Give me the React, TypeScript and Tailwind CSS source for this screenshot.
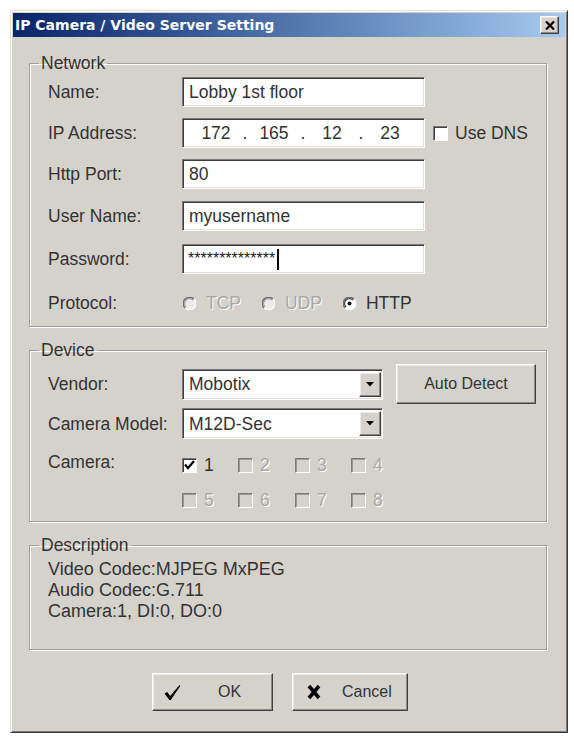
import React from 'react';

const sunken =
  'bg-white border border-t-[#7a7a7a] border-l-[#7a7a7a] border-b-white border-r-white shadow-[inset_1px_1px_0_#3c3c3c,inset_-1px_-1px_0_#e2dfda]';
const raised =
  'bg-[#d5d2cc] border border-t-white border-l-white border-b-[#404040] border-r-[#404040] shadow-[inset_-1px_-1px_0_#8a8a8a,inset_1px_1px_0_#ebe9e5]';
const disabledText = 'text-[#a9a7a3] [text-shadow:1px_1px_0_#ffffff]';

const Label: React.FC<{ children: React.ReactNode }> = ({ children }) => (
  <div className="w-[134px] shrink-0">{children}</div>
);

const TextBox: React.FC<{ children?: React.ReactNode; className?: string }> = ({ children, className }) => (
  <div className={`${sunken} w-[243px] h-[30px] flex items-center ${className ?? ''}`}>{children}</div>
);

const Radio: React.FC<{ checked?: boolean; disabled?: boolean; label: string }> = ({ checked, disabled, label }) => (
  <div className="flex items-center gap-[10px]">
    <svg width="13" height="13" viewBox="0 0 13 13">
      <circle cx="6.5" cy="6.5" r="6" fill={disabled ? '#ecebe8' : '#ffffff'} />
      <path d="M11 2.2 A6 6 0 0 0 2 11" fill="none" stroke="#6e6e6e" strokeWidth="1.5" />
      <path d="M10 3 A4.6 4.6 0 0 0 3 10" fill="none" stroke={disabled ? '#a09e9a' : '#404040'} strokeWidth="1.2" />
      <path d="M2.2 11 A6 6 0 0 0 11 2" fill="none" stroke="#ffffff" strokeWidth="1.2" />
      {checked && <circle cx="6.5" cy="6.5" r="2" fill="#111" />}
    </svg>
    <span className={disabled ? disabledText : ''}>{label}</span>
  </div>
);

const Check: React.FC<{ checked?: boolean; disabled?: boolean; label: string }> = ({ checked, disabled, label }) => (
  <div className="flex items-center gap-[7px]">
    <div
      className={`w-[15px] h-[15px] border border-t-[#7a7a7a] border-l-[#7a7a7a] border-b-white border-r-white flex items-center justify-center ${
        disabled ? 'bg-[#d5d2cc] shadow-[inset_1px_1px_0_#9a9894]' : 'bg-white shadow-[inset_1px_1px_0_#3c3c3c]'
      }`}
    >
      {checked && (
        <svg width="11" height="10" viewBox="0 0 11 10">
          <path d="M1 4.5 L4 8 L10 1" fill="none" stroke="#000" strokeWidth="2.2" />
        </svg>
      )}
    </div>
    <span className={disabled ? disabledText : ''}>{label}</span>
  </div>
);

const Select: React.FC<{ value: string }> = ({ value }) => (
  <div className={`${sunken} w-[201px] h-[31px] flex items-center shrink-0`}>
    <span className="flex-1 pl-[6px]">{value}</span>
    <div className={`${raised} w-[22px] h-[25px] mr-[1px] flex items-center justify-center`}>
      <svg width="8" height="5" viewBox="0 0 8 5">
        <path d="M0 0 H8 L4 4.5 Z" fill="#000" />
      </svg>
    </div>
  </div>
);

const Group: React.FC<{ title: string; className?: string; children: React.ReactNode }> = ({ title, className, children }) => (
  <fieldset className={`min-w-0 border border-[#a09e9a] shadow-[inset_1px_1px_0_#fff,1px_1px_0_#fff] ${className ?? ''}`}>
    <legend className="ml-[9px] px-[2px] leading-[20px]">{title}</legend>
    {children}
  </fieldset>
);

export default function App() {
  return (
    <div className="min-h-[740px] bg-white pt-[10px] pl-[10px] font-['Liberation_Sans',Arial,sans-serif] text-[17.5px] leading-[20px] text-[#333]">
      <div className="w-[558px] h-[723px] bg-[#d5d2cc] border border-t-[#e4e1dc] border-l-[#e4e1dc] border-b-[#3a3a3a] border-r-[#3a3a3a] shadow-[inset_1px_1px_0_#fff,inset_-1px_-1px_0_#7a7a7a] p-[2px] flex flex-col">
        <div className="h-[24px] bg-gradient-to-r from-[#0a246a] to-[#a6caf0] flex items-center justify-between pl-[2px] pr-[6px]">
          <span className="font-['DejaVu_Sans',Verdana,sans-serif] font-bold text-[14px] text-white">
            IP Camera / Video Server Setting
          </span>
          <div className={`${raised} w-[19px] h-[18px] flex items-center justify-center`}>
            <svg width="10" height="9" viewBox="0 0 10 9">
              <path d="M1 0.5 L9 8.5 M9 0.5 L1 8.5" stroke="#000" strokeWidth="2.2" />
            </svg>
          </div>
        </div>

        <div className="pl-[16px] pr-[18px] pt-[16px] flex flex-col">
          <Group title="Network">
            <div className="px-[18px] pt-[4px] pb-[8px] flex flex-col">
              <div className="flex items-center">
                <Label>Name:</Label>
                <TextBox className="pl-[6px]">Lobby 1st floor</TextBox>
              </div>
              <div className="flex items-center mt-[11px]">
                <Label>IP Address:</Label>
                <TextBox className="pl-[9px]">
                  <span className="w-[48px] text-center">172</span>
                  <span className="w-[10px] text-center">.</span>
                  <span className="w-[48px] text-center">165</span>
                  <span className="w-[10px] text-center">.</span>
                  <span className="w-[48px] text-center">12</span>
                  <span className="w-[10px] text-center">.</span>
                  <span className="w-[48px] text-center">23</span>
                </TextBox>
                <div className="ml-[8px]">
                  <Check label="Use DNS" />
                </div>
              </div>
              <div className="flex items-center mt-[11px]">
                <Label>Http Port:</Label>
                <TextBox className="pl-[6px]">80</TextBox>
              </div>
              <div className="flex items-center mt-[12px]">
                <Label>User Name:</Label>
                <TextBox className="pl-[6px]">myusername</TextBox>
              </div>
              <div className="flex items-center mt-[13px]">
                <Label>Password:</Label>
                <TextBox className="pl-[5px]">
                  <span className="text-[16px] self-start mt-[4px] text-[#222]">**************</span>
                  <span className="w-[2px] h-[21px] bg-black ml-[2px]" />
                </TextBox>
              </div>
              <div className="flex items-center mt-[14px] h-[30px]">
                <Label>Protocol:</Label>
                <div className="flex items-center gap-[21px] ml-[1px]">
                  <Radio disabled label="TCP" />
                  <Radio disabled label="UDP" />
                  <Radio checked label="HTTP" />
                </div>
              </div>
            </div>
          </Group>

          <Group title="Device" className="mt-[13px]">
            <div className="pl-[18px] pr-[10px] pt-[4px] pb-[11px] flex flex-col">
              <div className="flex items-center">
                <Label>Vendor:</Label>
                <Select value="Mobotix" />
                <div className={`${raised} ml-[13px] w-[140px] h-[40px] shrink-0 flex items-center justify-center text-[16px]`}>
                  Auto Detect
                </div>
              </div>
              <div className="flex items-center mt-[4px]">
                <Label>Camera Model:</Label>
                <Select value="M12D-Sec" />
              </div>
              <div className="flex mt-[16px]">
                <div className="w-[134px] shrink-0 -mt-[3px]">Camera:</div>
                <div className="grid grid-cols-[56px_57px_56px_57px] gap-y-[15px]">
                  <Check checked label="1" />
                  <Check disabled label="2" />
                  <Check disabled label="3" />
                  <Check disabled label="4" />
                  <Check disabled label="5" />
                  <Check disabled label="6" />
                  <Check disabled label="7" />
                  <Check disabled label="8" />
                </div>
              </div>
            </div>
          </Group>

          <Group title="Description" className="mt-[13px]">
            <div className="px-[18px] pt-[4px] pb-[27px] leading-[21px] text-[18px]">
              <div>Video Codec:MJPEG MxPEG</div>
              <div>Audio Codec:G.711</div>
              <div>Camera:1, DI:0, DO:0</div>
            </div>
          </Group>

          <div className="flex gap-[19px] mt-[23px] ml-[123px]">
            <div className={`${raised} w-[121px] h-[38px] flex items-center pl-[11px]`}>
              <svg width="17" height="17" viewBox="0 0 16 16">
                <path d="M0.5 9 L3 7.6 L5.8 11.2 L14.6 1 L15.4 1.8 L6.4 15 L5 15 Z" fill="#000" />
              </svg>
              <span className="ml-[37px] text-[16px]">OK</span>
            </div>
            <div className={`${raised} w-[116px] h-[38px] flex items-center pl-[14px]`}>
              <svg width="14" height="16" viewBox="0 0 14 15">
                <path d="M2 1.5 L12 13.5 M12 1.5 L2 13.5" stroke="#000" strokeWidth="3.6" />
              </svg>
              <span className="ml-[21px] text-[16px]">Cancel</span>
            </div>
          </div>
        </div>
      </div>
    </div>
  );
}
